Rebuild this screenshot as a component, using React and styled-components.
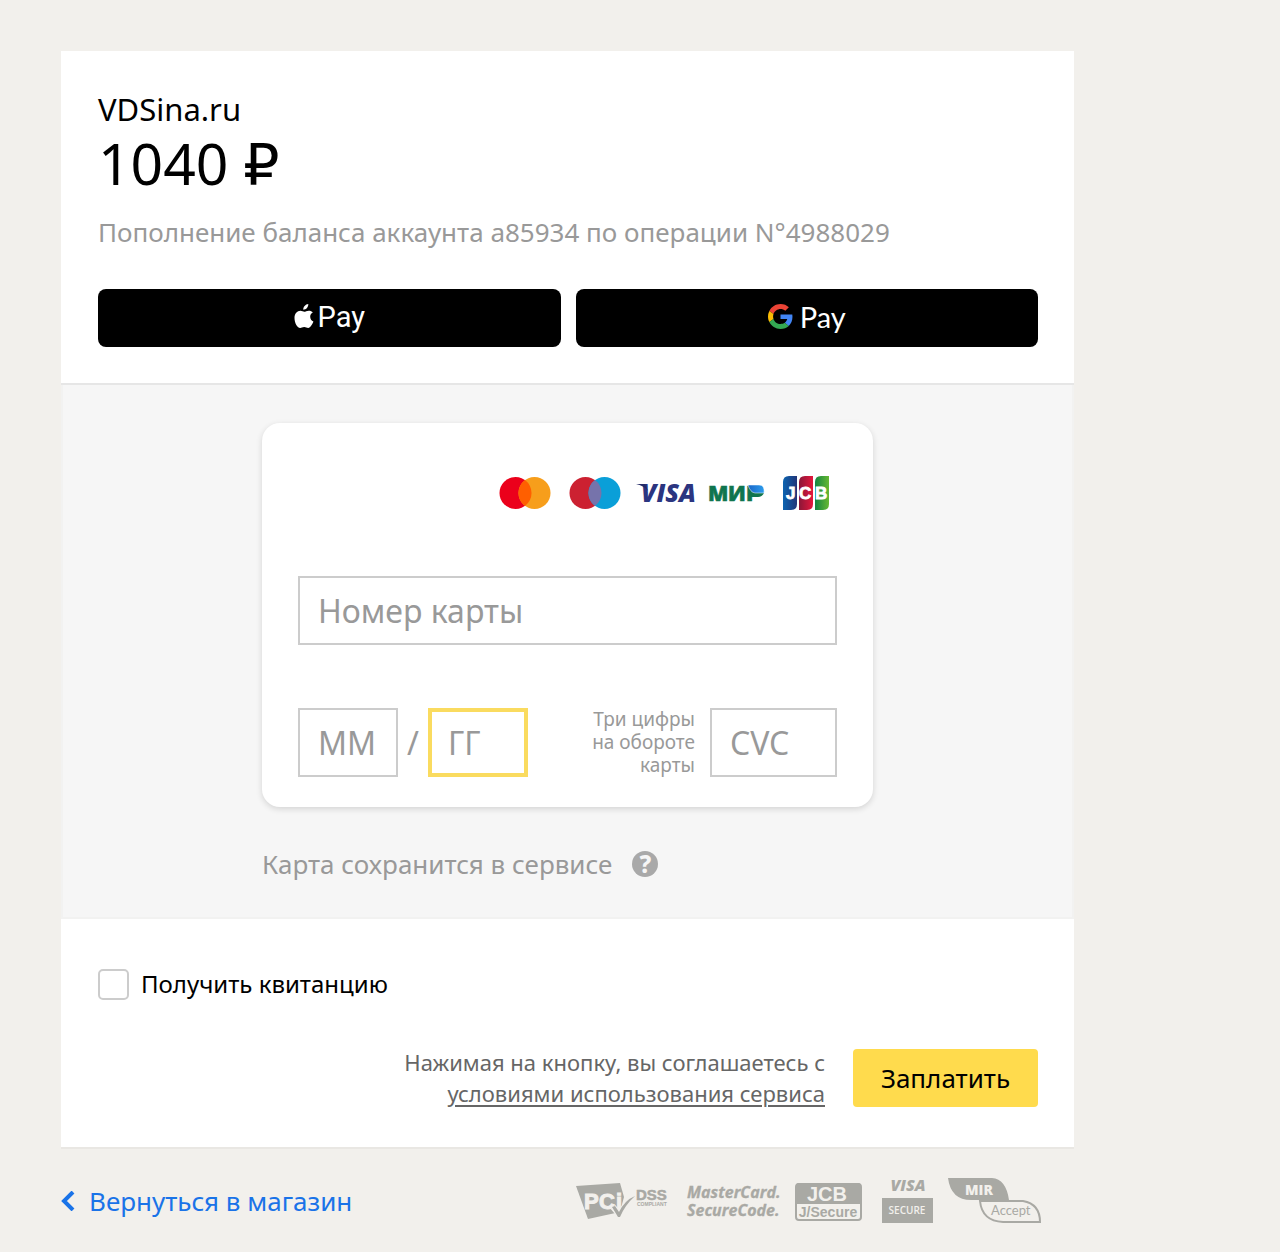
import React from "react";
import styled, { createGlobalStyle } from "styled-components";

const sans = `"Noto Sans", "Open Sans", sans-serif`;
const muted = "#999999";
const seal = "#a9a9a4";

const Global = createGlobalStyle`
  *, *::before, *::after { box-sizing: border-box; }
  body { margin: 0; background: #f2f0ec; color: #000; font-family: ${sans}; }
  input, button { font-family: inherit; margin: 0; }
`;

const Page = styled.main`
  max-width: 1074px;
  padding: 51px 0 28px 61px;
`;
const Panel = styled.form`
  background: #fff;
  box-shadow: 0 2px 0 #e9e7e3;
`;
const Summary = styled.header`
  padding: 37px 36px 36px 37px;
  border-bottom: 2px solid #e6e6e6;
`;
const Shop = styled.h1`
  margin: 0;
  font-weight: 400;
  font-size: 31px;
  line-height: 42px;
`;
const Amount = styled.p`
  margin: 0;
  font-size: 57px;
  line-height: 66px;
`;
const Ruble = styled.span`
  font-family: "DejaVu Sans", sans-serif;
  line-height: 1;
`;
const Purpose = styled.p`
  margin: 16px 0 37px;
  color: ${muted};
  font-size: 26px;
  line-height: 40px;
`;
const Wallets = styled.div`
  display: grid;
  grid-template-columns: 1fr 1fr;
  gap: 15px;
`;
const WalletButton = styled.button`
  display: flex;
  align-items: center;
  justify-content: center;
  gap: ${(p) => p.$gap}px;
  height: 58px;
  padding: 0 0 3px;
  border: 0;
  border-radius: 8px;
  background: #000;
  color: #fff;
  font-family: ${(p) => p.$font};
  font-size: 29px;
  line-height: 36px;
`;
const CardSection = styled.section`
  padding: 38px 199px 33px;
  border: solid #f2f2f1;
  border-width: 0 2px 2px;
  background: #f6f6f6;
`;
const Card = styled.div`
  padding: 52px 36px 30px;
  border-radius: 18px;
  background: #fff;
  box-shadow: 0 2px 6px rgba(0, 0, 0, 0.14);
`;
const Brands = styled.div`
  display: flex;
  justify-content: flex-end;
  align-items: center;
  padding-right: 7px;
  margin-bottom: 65px;
`;
const Brand = styled.svg`
  display: block;
  overflow: visible;
  margin-left: ${(p) => p.$space || 0}px;
`;
const Field = styled.input`
  display: block;
  width: ${(p) => p.$width || "100%"};
  height: 69px;
  padding: 0 18px;
  border: 2px solid #cccccc;
  border-radius: 0;
  background: #fff;
  color: #000;
  font-size: 32px;
  outline: 0;
  &::placeholder { color: ${muted}; opacity: 1; }
`;
const ActiveField = styled(Field)`
  padding: 0 16px;
  border: 4px solid #fadb5f;
`;
const FieldRow = styled.div`
  display: flex;
  align-items: center;
  margin-top: 63px;
`;
const Slash = styled.span`
  width: 30px;
  text-align: center;
  color: ${muted};
  font-size: 32px;
`;
const CodeLabel = styled.label`
  flex: 1;
  padding-right: 15px;
  text-align: right;
  color: ${muted};
  font-size: 19px;
  line-height: 23px;
`;
const SaveNote = styled.div`
  display: flex;
  align-items: center;
  gap: 20px;
  margin-top: 37px;
  color: ${muted};
  font-size: 26px;
  line-height: 40px;
`;
const HelpButton = styled.button`
  display: grid;
  place-items: center;
  width: 26px;
  height: 26px;
  padding: 0;
  border: 0;
  border-radius: 50%;
  background: #a9a9a9;
  color: #f6f6f6;
  font-size: 24px;
  font-weight: 800;
  line-height: 26px;
`;
const Confirm = styled.footer`
  padding: 48px 36px 38px 37px;
`;
const Receipt = styled.label`
  display: flex;
  align-items: center;
  gap: 12px;
  font-size: 24px;
  line-height: 34px;
`;
const Checkbox = styled.input`
  appearance: none;
  width: 31px;
  height: 31px;
  border: 2px solid #cccccc;
  border-radius: 5px;
  background: #fff;
  &:checked { background: #ffdb4d; }
`;
const PayRow = styled.div`
  display: flex;
  justify-content: flex-end;
  align-items: center;
  gap: 28px;
  margin-top: 46px;
`;
const Terms = styled.p`
  margin: 0;
  text-align: right;
  color: #666;
  font-size: 22px;
  line-height: 31px;
  a { color: inherit; text-underline-offset: 3px; text-decoration-thickness: 2px; }
`;
const PayButton = styled.button`
  width: 185px;
  height: 58px;
  padding: 0;
  border: 0;
  border-radius: 4px;
  background: #ffdb4d;
  color: #000;
  font-size: 26px;
`;
const Bottom = styled.div`
  display: flex;
  justify-content: space-between;
  align-items: center;
  margin-top: 31px;
  padding-right: 32px;
`;
const Back = styled.a`
  display: flex;
  align-items: center;
  gap: 14px;
  color: #1a73e8;
  font-size: 26px;
  line-height: 40px;
  text-decoration: none;
`;
const Seals = styled.div`
  display: flex;
  align-items: center;
`;

const AppleIcon = () => (
  <svg width="20" height="25" viewBox="0 0 20 25" fill="#fff" aria-hidden="true">
    <path d="M14.3 0c.2 2.900-2 5.700-5 5.700C9 3 11.500.2 14.300 0ZM18.800 8.500c-1.700 1-2.700 2.500-2.600 4.300 0 2.300 1.300 3.800 3.200 4.700-.8 2.500-3 6.300-5.200 6.500-1.500 0-2.200-.9-4-.9-1.900 0-2.700.9-4 .9C3.100 23.900.5 18.600.5 14c0-4.300 2.700-7.200 5.900-7.200 1.500 0 2.900 1 3.900 1 .9 0 2.600-1.100 4.500-1.100 1.600 0 3.100.6 4 1.800Z" />
  </svg>
);
const GoogleIcon = () => (
  <svg width="25" height="25" viewBox="0 0 48 48" aria-hidden="true">
    <path fill="#ea4335" d="M24 9.500c3.540 0 6.710 1.220 9.210 3.600l6.850-6.850C35.900 2.380 30.470 0 24 0 14.620 0 6.510 5.380 2.560 13.220l7.980 6.190C12.430 13.720 17.740 9.500 24 9.500z" />
    <path fill="#4285f4" d="M46.980 24.550c0-1.570-.15-3.090-.38-4.550H24v9.020h12.940c-.58 2.960-2.260 5.480-4.780 7.180l7.730 6c4.510-4.180 7.090-10.360 7.090-17.650z" />
    <path fill="#fbbc05" d="M10.530 28.590A14.500 14.500 0 0 1 9.770 24c0-1.600.27-3.140.76-4.590l-7.980-6.190A23.900 23.900 0 0 0 0 24c0 3.880.92 7.540 2.560 10.780l7.970-6.190z" />
    <path fill="#34a853" d="M24 48c6.480 0 11.930-2.130 15.890-5.810l-7.730-6c-2.150 1.450-4.920 2.300-8.160 2.300-6.260 0-11.570-4.220-13.470-9.910l-7.980 6.190C6.510 42.620 14.620 48 24 48z" />
  </svg>
);

const Circles = ({ left, right, mix, label, space }) => (
  <Brand $space={space} width="52" height="34" viewBox="0 0 52 34" role="img" aria-label={label}>
    <circle cx="16.500" cy="17" r="16" fill={left} />
    <circle cx="35.500" cy="17" r="16" fill={right} />
    <path d="M26 4.100a16 16 0 0 1 0 25.800a16 16 0 0 1 0-25.800Z" fill={mix} />
  </Brand>
);
const Visa = () => (
  <Brand $space={14} width="64" height="30" viewBox="0 0 64 30" role="img" aria-label="Visa">
    <text x="6" y="24" fill="#2b3580" fontFamily="Open Sans" fontWeight="800" fontStyle="italic" fontSize="25">VISA</text>
    <path d="M1 6h9l3 7C10 9 6 7 1 6Z" fill="#252b68" />
  </Brand>
);
const Mir = () => (
  <Brand $space={9} width="57" height="30" viewBox="0 0 57 30" role="img" aria-label="Мир">
    <defs>
      <linearGradient id="mirBlue"><stop stopColor="#1a66c9" /><stop offset="1" stopColor="#2c9cec" /></linearGradient>
    </defs>
    <text y="23" fill="#0f754e" stroke="#0f754e" strokeWidth=".6" fontFamily="Open Sans" fontWeight="800" fontSize="21">
      <tspan x="0">М</tspan><tspan x="20">И</tspan><tspan x="38">Р</tspan>
    </text>
    <path fill="#0f754e" d="M43 15h13q-2 4-6 4h-7Z" />
    <path fill="url(#mirBlue)" stroke="#fff" strokeWidth=".5" d="M40 7h11q6 0 5 8h-9q-5-1-7-8Z" />
  </Brand>
);
const Jcb = () => (
  <Brand $space={17} width="48" height="36" viewBox="0 0 48 36" role="img" aria-label="JCB">
    <defs>
      <linearGradient id="jb"><stop stopColor="#0b63b0" /><stop offset="1" stopColor="#213578" /></linearGradient>
      <linearGradient id="jr"><stop stopColor="#8b1738" /><stop offset="1" stopColor="#e4173d" /></linearGradient>
      <linearGradient id="jg"><stop stopColor="#138541" /><stop offset="1" stopColor="#66b833" /></linearGradient>
    </defs>
    <path fill="url(#jb)" d="M1 7Q1 1 7 1H15V29Q15 35 9 35H1Z" />
    <path fill="url(#jr)" d="M17 7Q17 1 23 1H31V29Q31 35 25 35H17Z" />
    <path fill="url(#jg)" d="M33 7Q33 1 39 1H47V29Q47 35 41 35H33Z" />
    <text y="24" fill="#fff" stroke="#fff" strokeWidth=".8" fontFamily="Liberation Sans" fontWeight="700" fontSize="17">
      <tspan x="4">J</tspan><tspan x="17">C</tspan><tspan x="33">B</tspan>
    </text>
  </Brand>
);

const PciSeal = () => (
  <Brand width="94" height="46" viewBox="0 0 94 46" role="img" aria-label="PCI DSS compliant">
    <path fill={seal} d="M0 8 44 5 48 19 44 34 12 41Z" />
    <text x="8" y="31" fill="#f2f0ec" stroke="#f2f0ec" fontFamily="Liberation Sans" fontWeight="700" fontSize="22">
      <tspan x="8">P</tspan><tspan x="23">C</tspan><tspan x="40">i</tspan>
    </text>
    <path d="m37 29 6 7L56 20" fill="none" stroke="#f2f0ec" strokeWidth="6" />
    <path fill={seal} d="m36 29 3-1 4 6q6-12 16-16-10 9-15 21h-2Z" />
    <text x="60" y="22" fill={seal} stroke={seal} strokeWidth=".5" fontFamily="Liberation Sans" fontWeight="700" fontSize="15">DSS</text>
    <text x="61" y="28" fill={seal} fontFamily="Liberation Sans" fontWeight="700" fontSize="5">COMPLIANT</text>
  </Brand>
);
const SecureCodeSeal = () => (
  <Brand $space={16} width="94" height="46" viewBox="0 0 94 46" role="img" aria-label="MasterCard SecureCode" fill={seal} stroke={seal} strokeWidth=".3" fontFamily="Open Sans" fontWeight="700" fontStyle="italic">
    <text x="1" y="20" fontSize="16">MasterCard.</text>
    <text x="1" y="38" fontSize="16">SecureCode.</text>
  </Brand>
);
const JSecureSeal = () => (
  <Brand $space={15} width="67" height="46" viewBox="0 0 67 46" role="img" aria-label="JCB J/Secure">
    <rect x="1" y="6" width="65" height="36" rx="3" fill="#f2f0ec" stroke={seal} strokeWidth="2" />
    <path d="M1 26V8q0-3 3-3h59q3 0 3 3v18Z" fill={seal} />
    <text x="32" y="23" textAnchor="middle" fill="#f2f0ec" fontFamily="Liberation Sans" fontWeight="700" fontSize="20">JCB</text>
    <text x="33" y="39" textAnchor="middle" fill={seal} fontFamily="Liberation Sans" fontWeight="700" fontSize="14">J/Secure</text>
  </Brand>
);
const VisaSeal = () => (
  <Brand $space={20} width="51" height="46" viewBox="0 0 51 46" role="img" aria-label="Visa Secure">
    <text x="26" y="13" textAnchor="middle" fill={seal} fontFamily="Open Sans" fontWeight="800" fontStyle="italic" fontSize="16">VISA</text>
    <rect y="20" width="51" height="25" fill={seal} />
    <text x="25" y="36" textAnchor="middle" fill="#f2f0ec" fontFamily="Open Sans" fontWeight="600" fontSize="10">SECURE</text>
  </Brand>
);
const MirSeal = () => (
  <Brand $space={15} width="94" height="46" viewBox="0 0 94 46" role="img" aria-label="MIR Accept">
    <path fill={seal} d="M0 0h44q14 1 17 22H25Q3 23 0 0Z" />
    <path fill="#f2f0ec" stroke={seal} strokeWidth="2" d="M32 23h43q17 3 17 21H55Q34 43 32 23Z" />
    <text x="17" y="17" fill="#f2f0ec" fontFamily="Open Sans" fontWeight="800" fontSize="14">MIR</text>
    <text x="43" y="37" fill={seal} fontFamily="Lato" fontSize="13">Accept</text>
  </Brand>
);

export default function App() {
  return (
    <>
      <Global />
      <Page>
        <Panel onSubmit={(e) => e.preventDefault()}>
          <Summary>
            <Shop>VDSina.ru</Shop>
            <Amount>1040 <Ruble>₽</Ruble></Amount>
            <Purpose>Пополнение баланса аккаунта a85934 по операции N°4988029</Purpose>
            <Wallets>
              <WalletButton type="button" $gap={4} $font={`Roboto, sans-serif`}>
                <AppleIcon />Pay
              </WalletButton>
              <WalletButton type="button" $gap={7} $font={`Lato, sans-serif`}>
                <GoogleIcon />Pay
              </WalletButton>
            </Wallets>
          </Summary>
          <CardSection>
            <Card>
              <Brands>
                <Circles left="#eb001b" right="#f79e1b" mix="#ff5f00" label="Mastercard" />
                <Circles space={18} left="#cc2131" right="#0a9fd8" mix="#7673ab" label="Maestro" />
                <Visa />
                <Mir />
                <Jcb />
              </Brands>
              <Field aria-label="Номер карты" placeholder="Номер карты" inputMode="numeric" />
              <FieldRow>
                <Field $width="100px" aria-label="Месяц" placeholder="ММ" inputMode="numeric" />
                <Slash>/</Slash>
                <ActiveField $width="100px" aria-label="Год" placeholder="ГГ" inputMode="numeric" />
                <CodeLabel htmlFor="cvc">Три цифры<br />на обороте<br />карты</CodeLabel>
                <Field id="cvc" $width="127px" placeholder="CVC" inputMode="numeric" />
              </FieldRow>
            </Card>
            <SaveNote>
              Карта сохранится в сервисе
              <HelpButton type="button">?</HelpButton>
            </SaveNote>
          </CardSection>
          <Confirm>
            <Receipt><Checkbox type="checkbox" />Получить квитанцию</Receipt>
            <PayRow>
              <Terms>
                Нажимая на кнопку, вы соглашаетесь с<br />
                <a href="#terms">условиями использования сервиса</a>
              </Terms>
              <PayButton type="submit">Заплатить</PayButton>
            </PayRow>
          </Confirm>
        </Panel>
        <Bottom>
          <Back href="#shop">
            <svg width="14" height="20" viewBox="0 0 14 20" fill="none" stroke="currentColor" strokeWidth="4" aria-hidden="true">
              <path d="m12 1-9 9 9 9" />
            </svg>
            Вернуться в магазин
          </Back>
          <Seals>
            <PciSeal />
            <SecureCodeSeal />
            <JSecureSeal />
            <VisaSeal />
            <MirSeal />
          </Seals>
        </Bottom>
      </Page>
    </>
  );
}
